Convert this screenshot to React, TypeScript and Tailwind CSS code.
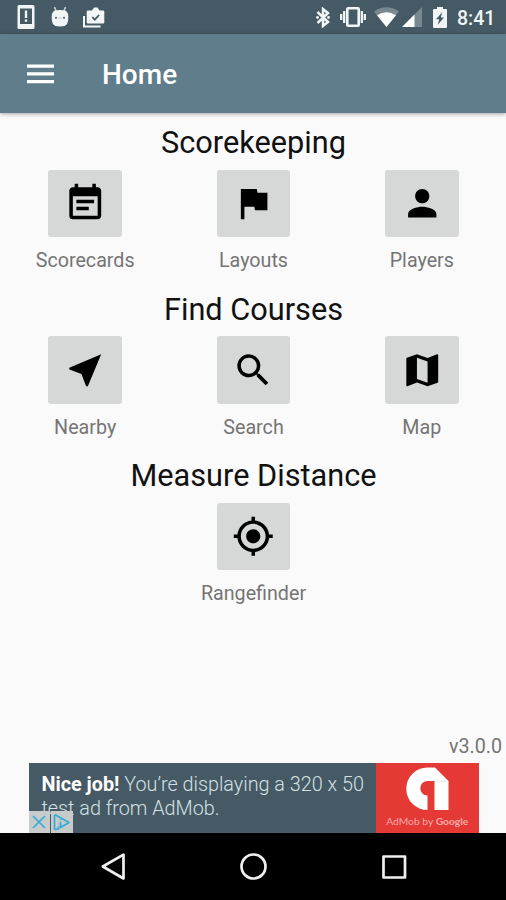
import type { ReactNode } from "react"
import type { IconType } from "react-icons"
import {
  MdEventNote,
  MdFlag,
  MdGpsFixed,
  MdMap,
  MdNearMe,
  MdPerson,
  MdSearch,
} from "react-icons/md"

type Item = { label: string; icon: IconType }

const sections: { title: string; items: Item[] }[] = [
  {
    title: "Scorekeeping",
    items: [
      { label: "Scorecards", icon: MdEventNote },
      { label: "Layouts", icon: MdFlag },
      { label: "Players", icon: MdPerson },
    ],
  },
  {
    title: "Find Courses",
    items: [
      { label: "Nearby", icon: MdNearMe },
      { label: "Search", icon: MdSearch },
      { label: "Map", icon: MdMap },
    ],
  },
  {
    title: "Measure Distance",
    items: [{ label: "Rangefinder", icon: MdGpsFixed }],
  },
]

const StatusBar = () => {
  return (
    <div className="flex h-[34px] shrink-0 items-center justify-between bg-[#455a64] pl-[17px] pr-[11px] text-[#f1f5f6]">
      <div className="flex items-center">
        <svg width="18" height="24" viewBox="0 0 18 24" className="block">
          <path
            fill="currentColor"
            fillRule="evenodd"
            d="M2 0h14a1.5 1.5 0 0 1 1.5 1.5v21A1.5 1.5 0 0 1 16 24H2a1.5 1.5 0 0 1-1.5-1.5v-21A1.5 1.5 0 0 1 2 0zM3 3.5v15.5h12V3.5zM7.8 5.5h2.4v7.500H7.8zM7.800 14.500h2.400v2.200H7.800z"
          />
        </svg>
        <svg width="18" height="20" viewBox="0 0 18 20" className="ml-[15.5px] block">
          <path d="M3.500 0 5.500 5M14.500 0 12.500 5" stroke="currentColor" strokeWidth="1.700" opacity="0.750" />
          <path
            fill="currentColor"
            d="M4 3.600Q9 2.200 14 3.600Q17 5 17.300 9Q17.600 14 16 17Q14.500 19.500 9 19.500T2 17Q0.400 14 0.700 9Q1 5 4 3.600z"
          />
          <circle cx="5" cy="10.800" r="1" fill="#455a64" />
          <circle cx="13" cy="10.800" r="1" fill="#455a64" />
          <path d="M7.500 11h3" stroke="#b4bfc4" strokeWidth="0.800" />
        </svg>
        <svg width="22" height="21" viewBox="0 0 22 21" className="ml-[14px] block">
          <path d="M1 9V19.500H17.500" fill="none" stroke="currentColor" strokeWidth="2" />
          <path
            fill="currentColor"
            d="M5 3.500h4L11 0.500h3.500L16.500 3.500H20a1.300 1.300 0 0 1 1.300 1.300v10.500A1.300 1.300 0 0 1 20 16.600H5a1.300 1.300 0 0 1-1.300-1.300V4.800A1.300 1.300 0 0 1 5 3.500z"
          />
          <path d="M9.300 10.200l2.500 2.500 4.300-4.700" fill="none" stroke="#455a64" strokeWidth="1.800" />
        </svg>
      </div>
      <div className="flex items-center">
        <svg width="14" height="21" viewBox="0 0 14 21" className="block">
          <path d="M1.500 5 12 15 7 19V2L12 6 1.500 16" fill="none" stroke="currentColor" strokeWidth="2.500" />
          <circle cx="1.500" cy="10.500" r="1.400" fill="currentColor" />
          <circle cx="12.500" cy="10.500" r="1.400" fill="currentColor" />
        </svg>
        <svg width="26" height="20" viewBox="0 0 26 20" className="ml-[10px] block">
          <rect x="7.300" y="1.300" width="11.400" height="17.400" rx="0.800" fill="none" stroke="currentColor" strokeWidth="2.600" />
          <path d="M4.200 4v12M21.800 4v12M1.200 7v6M24.800 7v6" stroke="currentColor" strokeWidth="2.300" />
        </svg>
        <svg width="25" height="20" viewBox="0 0 25 20" className="ml-[8px] block">
          <path d="M12.500 20 0 4.400Q12.500-4 25 4.400z" fill="currentColor" opacity="0.300" />
          <path d="M12.500 20 3 8.200Q12.500 2.500 22 8.200z" fill="#fff" />
        </svg>
        <svg width="20" height="20" viewBox="0 0 20 20" className="ml-[3px] block">
          <path d="M0 20 20 0V20z" fill="currentColor" opacity="0.300" />
          <path d="M0 20 12.500 7.500V20z" fill="#fff" />
        </svg>
        <svg width="14" height="21" viewBox="0 0 14 21" className="ml-[11px] block">
          <path
            fill="currentColor"
            d="M4 0h6v2H13a1 1 0 0 1 1 1v17a1 1 0 0 1-1 1H1a1 1 0 0 1-1-1V3a1 1 0 0 1 1-1h3z"
          />
          <path fill="#455a64" d="M9.200 5.200 3 12.300h3.200L4.800 17.800 11 10.600H7.800z" />
        </svg>
        <span className="ml-[10px] w-[38px] whitespace-nowrap pt-[3px] text-[19.5px] font-medium leading-none">8:41</span>
      </div>
    </div>
  )
}

const Toolbar = () => {
  return (
    <header className="z-10 flex h-[79px] shrink-0 items-center bg-[#607d8b] pl-[26.5px] text-white shadow-[0_1px_4px_rgba(0,0,0,0.35)]">
      <button aria-label="Menu" className="block">
        <svg width="27" height="20" viewBox="0 0 27 20" className="block">
          <path d="M0 2.200h27M0 9.900h27M0 17.600h27" stroke="currentColor" strokeWidth="3.200" />
        </svg>
      </button>
      <h1 className="ml-[48.5px] pt-[3px] text-[28px] font-medium leading-none">Home</h1>
    </header>
  )
}

const Tile = ({ label, icon: Icon }: Item) => {
  return (
    <div className="flex w-1/3 flex-col items-center">
      <button
        aria-label={label}
        className="flex h-[67.5px] w-[73.5px] items-center justify-center rounded-[3px] bg-[#d6d8d7] text-black"
      >
        <Icon size={42.5} />
      </button>
      <span className="mt-[12px] text-[19.7px] leading-6 text-[#757575]">{label}</span>
    </div>
  )
}

const Section = ({ title, children }: { title: string; children: ReactNode }) => {
  return (
    <section className="h-[166.6px]">
      <h2 className="h-[45.5px] pt-px text-center text-[30.7px] leading-9 text-[#111]">{title}</h2>
      <div className="flex justify-center">{children}</div>
    </section>
  )
}

const AdBanner = () => {
  return (
    <div className="relative ml-[28.5px] flex h-[70px] w-[450px] bg-[#455a64]">
      <p className="flex-1 whitespace-nowrap pl-[13px] pt-[10px] text-[19.8px] font-light leading-[23.5px] text-[#d5e0e5]">
        <b className="font-bold text-white">Nice job!</b> You’re displaying a 320 x 50
        <br />
        test ad from AdMob.
      </p>
      <div className="flex w-[102.5px] flex-col items-center bg-[#e53935] pt-[4px]">
        <svg width="43" height="43" viewBox="0 0 43 43" className="block">
          <path
            fill="#fff"
            d="M29 0.500H21.500A21 21 0 0 0 21.500 43V28.500A7.200 7.200 0 0 1 21.500 14H28.500V43H42.500V14z"
          />
          <path d="M29 14.500H40" stroke="#dce9ec" strokeWidth="0.800" />
        </svg>
        <span className="mt-[4px] whitespace-nowrap font-[Lato] text-[10.3px] leading-[14px] text-[#f6aaa8]">
          AdMob by <span className="font-bold">Google</span>
        </span>
      </div>
      <div className="absolute bottom-0 left-0 flex gap-px">
        <span className="flex h-[22px] w-[21px] items-center justify-center bg-[#c8cbcc]">
          <svg width="14" height="14" viewBox="0 0 14 14">
            <path d="M1 1 13 13M13 1 1 13" stroke="#35abd2" strokeWidth="1.700" />
          </svg>
        </span>
        <span className="flex h-[22px] w-[22px] items-center justify-center bg-[#c8cbcc]">
          <svg width="18" height="17" viewBox="0 0 18 17">
            <path
              d="M5.500 12.500V15L2.500 15.500 1.500 15V2Q1.500 0.800 3 1.300L16 8.500 7.500 13.500V7.500M7.500 3.800V5.800"
              fill="none"
              stroke="#35abd2"
              strokeWidth="1.700"
              strokeLinejoin="round"
            />
          </svg>
        </span>
      </div>
    </div>
  )
}

const NavBar = () => {
  return (
    <nav className="flex h-[67px] shrink-0 items-center justify-center bg-black">
      <svg width="506" height="67" viewBox="0 0 506 67" fill="none" stroke="#f0f0f0" strokeWidth="2.700" strokeLinejoin="round">
        <path d="M102.800 33.500 123.500 21.700V45.500z" />
        <circle cx="253.500" cy="33.500" r="12" />
        <rect x="383.500" y="23.500" width="21.500" height="21" />
      </svg>
    </nav>
  )
}

export default function App() {
  return (
    <div className="flex h-[900px] w-[506px] flex-col overflow-hidden bg-[#fafafa] font-[Roboto,sans-serif]">
      <StatusBar />
      <Toolbar />
      <main className="flex-1 pl-px pt-[11px]">
        {sections.map((section) => (
          <Section key={section.title} title={section.title}>
            {section.items.map((item) => (
              <Tile key={item.label} {...item} />
            ))}
          </Section>
        ))}
      </main>
      <p className="pb-[4px] pr-[4px] text-right text-[19.7px] leading-6 text-[#757575]">v3.0.0</p>
      <AdBanner />
      <NavBar />
    </div>
  )
}
